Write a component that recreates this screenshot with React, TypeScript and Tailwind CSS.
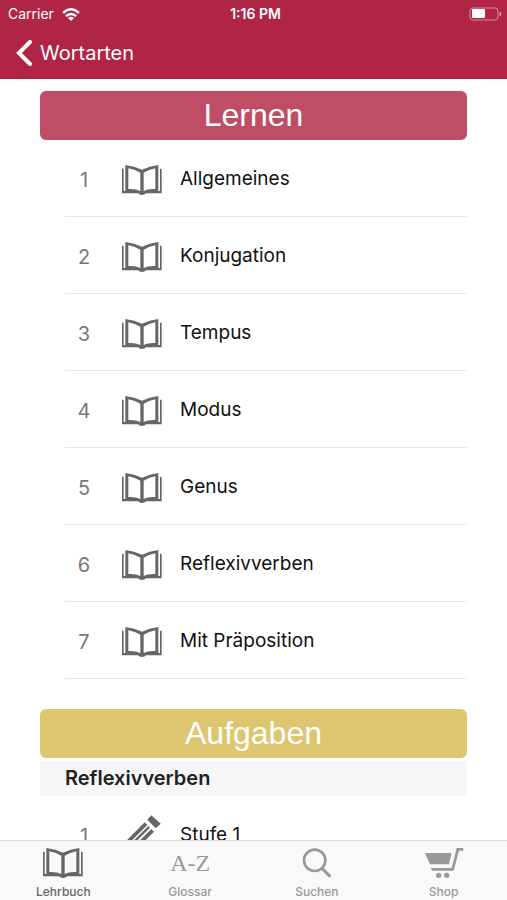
import type { ReactNode } from 'react';

interface Lesson {
  id: number;
  title: string;
}

const lessons: Lesson[] = [
  { id: 1, title: 'Allgemeines' },
  { id: 2, title: 'Konjugation' },
  { id: 3, title: 'Tempus' },
  { id: 4, title: 'Modus' },
  { id: 5, title: 'Genus' },
  { id: 6, title: 'Reflexivverben' },
  { id: 7, title: 'Mit Präposition' },
];

const exercises: Lesson[] = [{ id: 1, title: 'Stufe 1' }];

function BookIcon() {
  return (
    <svg viewBox="0 0 120 90" className="h-[30px] w-10" fill="currentColor" aria-hidden="true">
      <path d="M0 11h5v68h-5zM114 11h5v68h-5z" />
      <path
        fillRule="evenodd"
        d="M10 0Q38 3 60 14Q82 3 109 0V80H10ZM19 10V72Q42 71 55 78V23Q40 14 19 10ZM100 10Q80 14 65 23V78Q77 71 100 72Z"
      />
      <path d="M0 78H119V85H72Q68 90 60 90Q52 90 48 85H0Z" />
    </svg>
  );
}

function PencilIcon() {
  return (
    <svg viewBox="0 0 120 126" className="h-[42px] w-10" fill="currentColor" aria-hidden="true">
      <path d="M88 1L116 26L101 40L76 14Z" />
      <path d="M68 22L76 30L24 82L16 74Z" />
      <path d="M79 33L84 38L34 88L29 83Z" />
      <path d="M88 42L96 50L44 102L36 94Z" />
      <path d="M12 80L38 106L4 116Z" />
    </svg>
  );
}

function CartIcon() {
  return (
    <svg viewBox="0 0 120 90" className="h-[30px] w-10" fill="currentColor" aria-hidden="true">
      <path d="M3 15H83L75 49H18Z" />
      <path d="M98 0H118V8H105L89 68H24L20 60H83Z" />
      <circle cx="44" cy="82" r="8" />
      <circle cx="68" cy="82" r="8" />
    </svg>
  );
}

function SearchIcon() {
  return (
    <svg viewBox="0 0 90 90" className="size-[30px]" fill="none" stroke="currentColor" aria-hidden="true">
      <circle cx="38" cy="37" r="32" strokeWidth="8" />
      <path d="M60 61L85 86" strokeWidth="9" />
    </svg>
  );
}

function StatusBar() {
  return (
    <div className="grid h-7 grid-cols-3 items-center pr-1 pl-2 text-sm">
      <div className="flex items-center gap-2">
        <span>Carrier</span>
        <svg viewBox="0 0 52 38" className="h-[13px] w-[18px]" fill="none" stroke="currentColor" strokeWidth="7" aria-hidden="true">
          <path d="M3 14Q26 -7 49 14" />
          <path d="M11 24Q26 11 41 24" />
          <path d="M17 29Q26 22 35 29L26 38Z" fill="currentColor" stroke="none" />
        </svg>
      </div>
      <span className="text-center font-semibold">1:16 PM</span>
      <svg viewBox="0 0 34 14" className="h-[14px] w-[34px] justify-self-end" aria-hidden="true">
        <rect x="1" y="1" width="28" height="12" rx="3" fill="none" stroke="#d98b9f" />
        <rect x="3" y="2" width="13" height="9" rx="1" fill="white" />
        <path d="M31 5Q33 7 31 9Z" fill="#d98b9f" stroke="#d98b9f" />
      </svg>
    </div>
  );
}

function LessonList({ items, icon }: { items: Lesson[]; icon: ReactNode }) {
  return (
    <ul className="pl-[25px]">
      {items.map((item) => (
        <li key={item.id} className="border-b border-[#e9e9e9]">
          <a href={`#${item.title}`} className="flex h-[76px] items-center pt-[3px]">
            <span className="w-[38px] text-center text-xl text-[#777]">{item.id}</span>
            <span className="ml-[19px] text-[#666]">{icon}</span>
            <span className="ml-[18px] text-[19px] text-[#111]">{item.title}</span>
          </a>
        </li>
      ))}
    </ul>
  );
}

const tabs = [
  { label: 'Lehrbuch', icon: <BookIcon />, active: true },
  { label: 'Glossar', icon: <span className="font-['Liberation_Serif',serif] text-2xl">A-Z</span>, active: false },
  { label: 'Suchen', icon: <SearchIcon />, active: false },
  { label: 'Shop', icon: <CartIcon />, active: false },
];

export default function App() {
  return (
    <div className="flex h-screen flex-col bg-white font-['Inter',sans-serif]">
      <header className="bg-[#b02545] text-white">
        <StatusBar />
        <button type="button" className="flex h-[51px] items-center gap-2 pb-[2px] pl-4 text-xl">
          <svg viewBox="0 0 16 26" className="h-[26px] w-4" fill="none" stroke="currentColor" strokeWidth="4" aria-hidden="true">
            <path d="M14 2L3 13L14 24" strokeLinecap="round" />
          </svg>
          Wortarten
        </button>
      </header>

      <main className="min-h-0 flex-1 overflow-y-auto px-10 pt-3 [scrollbar-width:none]">
        <section>
          <h2 className="rounded-md bg-[#c04d66] text-center font-['Liberation_Sans',sans-serif] text-[32px] leading-[49px] text-white">
            Lernen
          </h2>
          <LessonList items={lessons} icon={<BookIcon />} />
        </section>

        <section className="mt-[30px]">
          <h2 className="rounded-md bg-[#dec670] text-center font-['Liberation_Sans',sans-serif] text-[32px] leading-[49px] text-white">
            Aufgaben
          </h2>
          <h3 className="mt-[3px] bg-[#f6f6f6] pl-[25px] text-xl leading-[35px] font-semibold text-[#222]">Reflexivverben</h3>
          <LessonList items={exercises} icon={<PencilIcon />} />
        </section>
      </main>

      <nav className="grid h-[60px] shrink-0 grid-cols-4 border-t border-[#dcdcdc] bg-[#f9f9f9]">
        {tabs.map((tab) => (
          <button
            key={tab.label}
            type="button"
            className={`flex flex-col items-center pt-[7px] text-xs font-medium ${tab.active ? 'text-[#666]' : 'text-[#999]'}`}
          >
            <span className="flex h-[30px] items-center">{tab.icon}</span>
            <span className="mt-[6px]">{tab.label}</span>
          </button>
        ))}
      </nav>
    </div>
  );
}
